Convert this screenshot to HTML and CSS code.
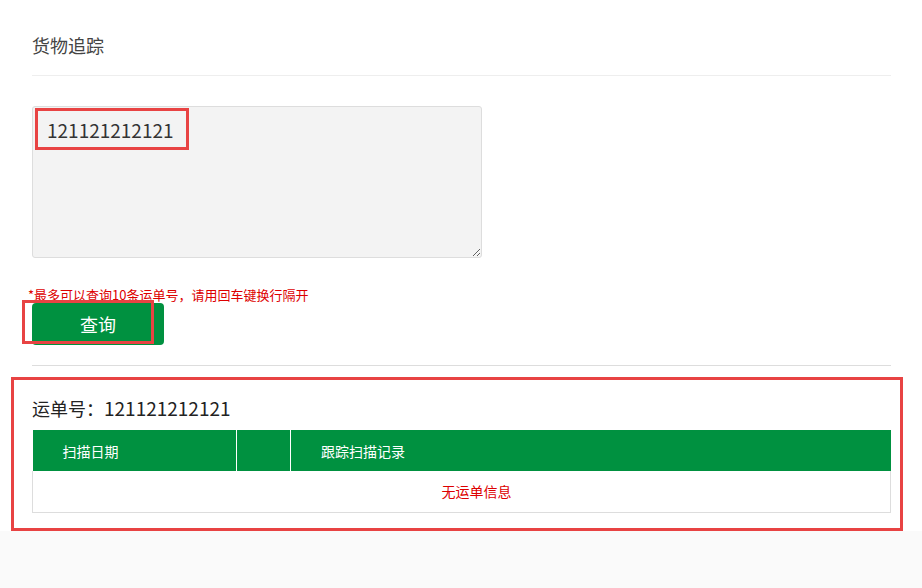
FILE: index.html
```html
<!DOCTYPE html>
<html lang="zh-CN">
<head>
  <meta charset="UTF-8">
  <meta name="viewport" content="width=device-width, initial-scale=1.0">
  <title>货物追踪</title>
  <link rel="stylesheet" href="styles.css">
</head>
<body>
  <div class="panel">
    <h2 class="panel-title">货物追踪</h2>

    <form class="track-form">
      <textarea class="track-input">121121212121</textarea>
      <p class="track-hint">*最多可以查询10条运单号，请用回车键换行隔开</p>
      <button type="button" class="track-btn">查询</button>
    </form>

    <div class="result">
      <h3 class="waybill">运单号：<span class="waybill-no">121121212121</span></h3>
      <table class="track-table">
        <colgroup>
          <col class="col-date">
          <col class="col-gap">
          <col>
        </colgroup>
        <thead>
          <tr>
            <th>扫描日期</th>
            <th></th>
            <th>跟踪扫描记录</th>
          </tr>
        </thead>
        <tbody>
          <tr>
            <td colspan="3" class="empty">无运单信息</td>
          </tr>
        </tbody>
      </table>
    </div>

    <!-- annotation boxes -->
    <div class="mark mark-input"></div>
    <div class="mark mark-btn"></div>
    <div class="mark mark-result"></div>
  </div>
</body>
</html>
```

FILE: styles.css
```css
/* Global */
* {
  margin: 0;
  padding: 0;
  box-sizing: border-box;
}

body {
  background: #fafafa;
  font-family: "Noto Sans CJK SC", "Noto Sans", sans-serif;
  color: #333;
}

/* Panel */
.panel {
  position: relative;
  background: #fff;
  padding: 33px 31px 18px 32px;
}

.panel-title {
  font-size: 18px;
  font-weight: 400;
  line-height: 24px;
  color: #444;
  padding-bottom: 18px;
  border-bottom: 1px solid #eee;
}

/* Form */
.track-form {
  margin-top: 30px;
  padding-bottom: 20px;
  border-bottom: 1px solid #ddd;
}

.track-input {
  display: block;
  width: 450px;
  height: 152px;
  padding: 10px 14px;
  background: #f3f3f3;
  border: 1px solid #ddd;
  border-radius: 3px;
  font-family: "Noto Sans CJK SC", "Noto Sans", sans-serif;
  font-size: 19px;
  line-height: 26px;
  color: #333;
}

.track-hint {
  margin: 29px 0 0 -4px;
  font-size: 13px;
  line-height: 16px;
  color: #d00;
}

.track-btn {
  display: block;
  width: 132px;
  height: 42px;
  border: 0;
  border-radius: 4px;
  background: #009140;
  color: #fff;
  font-family: "Noto Sans CJK SC", "Noto Sans", sans-serif;
  font-size: 18px;
  cursor: pointer;
}

/* Result */
.result {
  margin-top: 30px;
}

.waybill {
  font-size: 18px;
  font-weight: 400;
  line-height: 24px;
  color: #222;
  margin-bottom: 10px;
}

.waybill-no {
  font-size: 19px;
}

.track-table {
  width: 100%;
  border-collapse: collapse;
  table-layout: fixed;
}

.col-date { width: 204px; }
.col-gap { width: 54px; }

.track-table th {
  height: 41px;
  padding: 0 0 0 30px;
  background: #009140;
  color: #fff;
  font-size: 14px;
  font-weight: 400;
  text-align: left;
  border-left: 1px solid #fff;
}

.track-table th:first-child {
  border-left: 0;
}

.track-table td {
  height: 41px;
  padding: 0 0 0 30px;
  border: 1px solid #ddd;
  border-top: 0;
  font-size: 14px;
}

.empty {
  text-align: center;
  color: #d00;
}

/* Annotation boxes */
.mark {
  position: absolute;
  border: 3px solid #e84343;
}

.mark-input {
  left: 35px;
  top: 108px;
  width: 154px;
  height: 42px;
}

.mark-btn {
  left: 22px;
  top: 300px;
  width: 132px;
  height: 44px;
}

.mark-result {
  left: 11px;
  top: 377px;
  width: 892px;
  height: 154px;
}
```
